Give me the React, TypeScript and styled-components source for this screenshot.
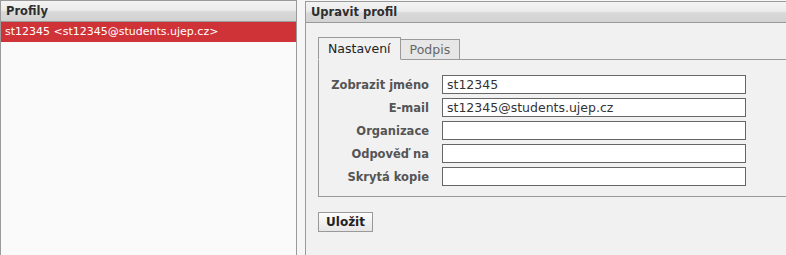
import React from "react";
import styled, { createGlobalStyle } from "styled-components";

const GlobalStyle = createGlobalStyle`
  html, body { margin: 0; padding: 0; }
  body {
    background: #f6f6f6;
    font-family: "DejaVu Sans", Verdana, sans-serif;
    overflow: hidden;
  }
`;

const Page = styled.div`
  display: flex;
  gap: 8px;
  height: 255px;
  width: 786px;
  overflow: hidden;
`;

const LeftPanel = styled.section`
  width: 295px;
  flex: none;
  border: 1px solid #9a9a9a;
  border-bottom: none;
  background: #fafafa;
`;

const RightPanel = styled.section`
  flex: 1;
  margin-top: 1px;
  border-left: 1px solid #9a9a9a;
  border-top: 1px solid #9a9a9a;
  background: #f1f1f1;
`;

const PanelHeader = styled.div`
  height: 20px;
  line-height: 20px;
  padding-left: 5px;
  border-bottom: 1px solid #9a9a9a;
  background: linear-gradient(#f3f3f3 0%, #ececec 45%, #d9d9d9 55%, #d2d2d2 100%);
  font-weight: bold;
  font-size: 11.5px;
  color: #2e2e2e;
`;

const ProfileRow = styled.div`
  height: 20px;
  line-height: 20px;
  padding-left: 4px;
  background: #cf3237;
  color: #fff;
  font-size: 11px;
  white-space: nowrap;
`;

const Content = styled.div`
  padding: 14px 0 0 12px;
`;

const TabStrip = styled.div`
  display: flex;
  align-items: flex-end;
  margin-bottom: -1px;
`;

const Tab = styled.div<{ $active?: boolean }>`
  position: relative;
  padding: 0 9px;
  font-size: 12.5px;
  border: 1px solid #9a9a9a;
  ${(p) =>
    p.$active
      ? `
    height: 21px;
    line-height: 21px;
    background: #f1f1f1;
    color: #222;
    border-bottom-color: #f1f1f1;
    z-index: 1;
  `
      : `
    height: 19px;
    line-height: 19px;
    background: #e7e7e7;
    color: #666;
    border-left: none;
  `}
`;

const TabPanel = styled.div`
  border: 1px solid #9a9a9a;
  border-right: none;
  padding: 15px 0 10px 0;
`;

const FormGrid = styled.div`
  display: grid;
  grid-template-columns: 110px 304px;
  column-gap: 13px;
  row-gap: 4px;
  align-items: center;
`;

const Label = styled.label`
  text-align: right;
  font-weight: bold;
  font-size: 11.5px;
  color: #555;
  white-space: nowrap;
`;

const Input = styled.input`
  box-sizing: border-box;
  width: 304px;
  height: 19px;
  margin: 0;
  padding: 0 4px;
  border: 1px solid #666;
  background: #fff;
  font-family: "DejaVu Sans", Verdana, sans-serif;
  font-size: 12.5px;
  color: #333;
  outline: none;
`;

const Actions = styled.div`
  padding-top: 14px;
`;

const Button = styled.button`
  box-sizing: border-box;
  height: 20px;
  width: 55px;
  padding: 0;
  border: 1px solid #999;
  background: linear-gradient(#fdfdfd, #e6e6e6);
  font-family: "DejaVu Sans", Verdana, sans-serif;
  font-weight: bold;
  font-size: 12px;
  color: #222;
`;

const fields = [
  { label: "Zobrazit jméno", value: "st12345" },
  { label: "E-mail", value: "st12345@students.ujep.cz" },
  { label: "Organizace", value: "" },
  { label: "Odpověď na", value: "" },
  { label: "Skrytá kopie", value: "" },
];

export default function App() {
  return (
    <>
      <GlobalStyle />
      <Page>
        <LeftPanel>
          <PanelHeader>Profily</PanelHeader>
          <ProfileRow>{"st12345 <st12345@students.ujep.cz>"}</ProfileRow>
        </LeftPanel>
        <RightPanel>
          <PanelHeader>Upravit profil</PanelHeader>
          <Content>
            <TabStrip>
              <Tab $active>Nastavení</Tab>
              <Tab>Podpis</Tab>
            </TabStrip>
            <TabPanel>
              <FormGrid>
                {fields.map((f) => (
                  <React.Fragment key={f.label}>
                    <Label>{f.label}</Label>
                    <Input defaultValue={f.value} readOnly />
                  </React.Fragment>
                ))}
              </FormGrid>
            </TabPanel>
            <Actions>
              <Button>Uložit</Button>
            </Actions>
          </Content>
        </RightPanel>
      </Page>
    </>
  );
}
